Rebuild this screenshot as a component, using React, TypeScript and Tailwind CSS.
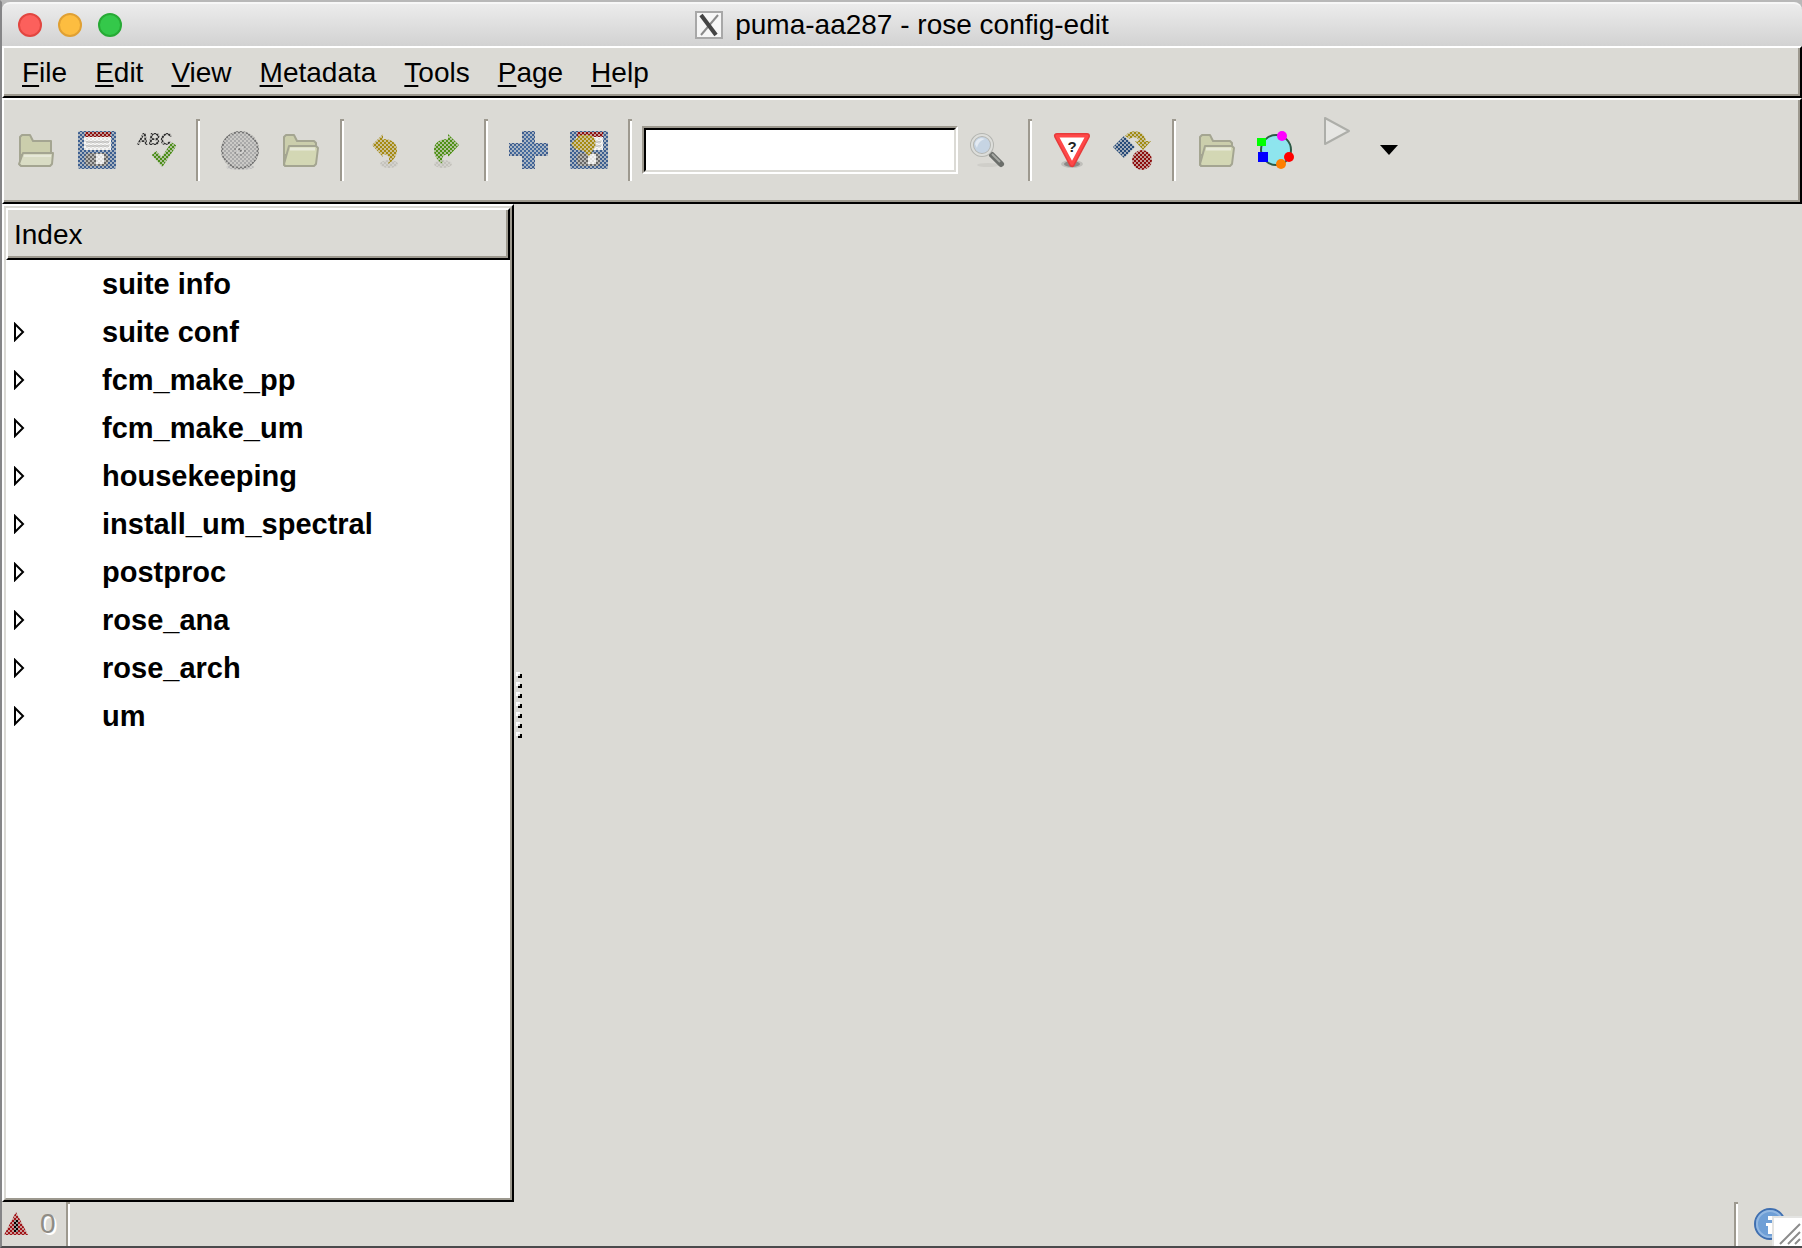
import { useId, type ReactNode } from "react";

const menus = ["File", "Edit", "View", "Metadata", "Tools", "Page", "Help"];

const sections = [
  { name: "suite info", expandable: false },
  { name: "suite conf", expandable: true },
  { name: "fcm_make_pp", expandable: true },
  { name: "fcm_make_um", expandable: true },
  { name: "housekeeping", expandable: true },
  { name: "install_um_spectral", expandable: true },
  { name: "postproc", expandable: true },
  { name: "rose_ana", expandable: true },
  { name: "rose_arch", expandable: true },
  { name: "um", expandable: true },
];

interface IconProps {
  children: ReactNode;
  disabled?: boolean;
}

// Disabled icons are stippled with a 2px checkerboard, as GTK 2 does.
function Icon({ children, disabled = false }: IconProps) {
  const id = useId();

  return (
    <svg className="block" width="40" height="40" viewBox="0 0 40 40">
      {disabled && (
        <defs>
          <pattern
            id={`${id}p`}
            width="4"
            height="4"
            patternUnits="userSpaceOnUse"
          >
            <rect width="4" height="4" fill="#505050" />
            <rect width="2" height="2" fill="#fff" />
            <rect x="2" y="2" width="2" height="2" fill="#fff" />
          </pattern>
          <mask
            id={`${id}m`}
            maskUnits="userSpaceOnUse"
            x="0"
            y="0"
            width="40"
            height="40"
          >
            <rect width="40" height="40" fill={`url(#${id}p)`} />
          </mask>
        </defs>
      )}
      <g mask={disabled ? `url(#${id}m)` : undefined}>{children}</g>
    </svg>
  );
}

function FolderOpenIcon() {
  return (
    <Icon>
      <g stroke="#a4a591" strokeWidth="2" strokeLinejoin="round">
        <path d="M4 35V7l2-2h8l3 6h18v14H4z" fill="#cbceac" />
        <path d="M7 23h30l-1 11-2 2H5l-2-2z" fill="#d9dcc4" />
      </g>
      <path d="M8 26h27" stroke="#e6e8d8" strokeWidth="2" />
    </Icon>
  );
}

function FolderIcon() {
  return (
    <Icon>
      <g stroke="#a4a591" strokeWidth="2" strokeLinejoin="round">
        <path d="M4 35V7l2-2h8l3 6h17l2 2v12H4z" fill="#cbceac" />
        <path d="M9 16h27l2 2-2 16-2 2H5l-1-2z" fill="#d3d7b4" />
      </g>
      <path d="M10 19h25" stroke="#e6e8d8" strokeWidth="3" />
    </Icon>
  );
}

function Floppy() {
  return (
    <>
      <rect x="2" y="1" width="38" height="38" rx="2" fill="#3d5f90" />
      <rect x="9" y="2" width="26" height="5" fill="#8c1010" />
      <rect x="8" y="7" width="27" height="13" fill="#f6f6f6" />
      <path d="M10 12h23M10 16h23" stroke="#c4c4c4" strokeWidth="2" />
      <rect x="9" y="23" width="23" height="13" rx="4" fill="#666" />
      <rect x="20" y="24" width="8" height="10" fill="#f2f2f2" />
    </>
  );
}

function SaveIcon() {
  return (
    <Icon disabled>
      <Floppy />
    </Icon>
  );
}

function SpellCheckIcon() {
  return (
    <Icon disabled>
      <text
        x="1"
        y="15"
        fontFamily="Liberation Sans, sans-serif"
        fontSize="16"
        fontWeight="700"
        fontStyle="italic"
        fill="#333"
      >
        ABC
      </text>
      <path
        d="M18 23l8 9 12-18"
        fill="none"
        stroke="#4b8d18"
        strokeWidth="6"
      />
    </Icon>
  );
}

function DiscIcon() {
  return (
    <Icon disabled>
      <ellipse cx="20" cy="37" rx="14" ry="3" fill="#bbb" />
      <circle cx="20" cy="20" r="18" fill="#aaa" stroke="#777" strokeWidth="2" />
      <circle cx="20" cy="20" r="5" fill="#c8c8c8" stroke="#909090" strokeWidth="2" />
      <circle cx="20" cy="20" r="2" fill="#777" />
    </Icon>
  );
}

function UndoIcon() {
  return (
    <Icon disabled>
      <ellipse cx="25" cy="34" rx="9" ry="4" fill="#c4c2bc" />
      <path
        d="M8 15L19 4v5c9 0 14 4 14 11 0 6-4 11-9 14 2-5 2-9-5-10v3z"
        fill="#a58a12"
      />
    </Icon>
  );
}

function RedoIcon() {
  return (
    <Icon disabled>
      <ellipse cx="19" cy="34" rx="9" ry="4" fill="#c4c2bc" />
      <path
        d="M35 15L24 4v5c-9 0-14 4-14 11 0 6 4 11 9 14-2-5-1-9 5-10v3z"
        fill="#4f9016"
      />
    </Icon>
  );
}

function AddIcon() {
  return (
    <Icon disabled>
      <path
        d="M15 2h11v12h13v11H26v13H15V25H2V14h13z"
        fill="#44699c"
        stroke="#3d5c8d"
        strokeWidth="2"
      />
    </Icon>
  );
}

function RevertIcon() {
  return (
    <Icon disabled>
      <Floppy />
      <path d="M3 14L12 5h10c6 2 7 9 4 14l-5 7-5-5-9-2z" fill="#a58a12" />
    </Icon>
  );
}

function SearchIcon() {
  return (
    <Icon>
      <ellipse cx="20" cy="35" rx="11" ry="2" fill="#cfcec9" />
      <path
        d="M24 25l9 9"
        stroke="#6b6e6a"
        strokeWidth="6"
        strokeLinecap="round"
      />
      <path d="M24 24l8 8" stroke="#a6a9a4" strokeWidth="2" />
      <circle
        cx="14"
        cy="15"
        r="10"
        fill="#c6d4e3"
        stroke="#b4b5b1"
        strokeWidth="4"
      />
      <circle cx="14" cy="15" r="10" fill="none" stroke="#dddedb" strokeWidth="2" />
      <path d="M7 14c1-5 6-7 10-5-4 1-7 4-8 9z" fill="#e3eaf2" />
    </Icon>
  );
}

function WarningIcon() {
  return (
    <Icon>
      <ellipse cx="20" cy="34" rx="11" ry="4" fill="#c0bfbb" />
      <ellipse cx="20" cy="34" rx="8" ry="3" fill="#8a8987" />
      <path
        d="M5 6h30L20 34z"
        fill="#fff"
        stroke="#e63b3b"
        strokeWidth="6"
        strokeLinejoin="round"
      />
      <path
        d="M5 6h30L20 34z"
        fill="#fff"
        stroke="#ff4848"
        strokeWidth="3"
        strokeLinejoin="round"
      />
      <text
        x="20"
        y="22"
        textAnchor="middle"
        fontFamily="Liberation Sans, sans-serif"
        fontSize="15"
        fontWeight="700"
        fill="#222"
      >
        ?
      </text>
    </Icon>
  );
}

function TransformIcon() {
  return (
    <Icon disabled>
      <path d="M12 6l11 11-11 11L1 17z" fill="#264a78" />
      <path
        d="M13 6c5-7 19-7 21 5h5l-8 9-8-9h4c-1-4-6-5-9-2z"
        fill="#a08a12"
      />
      <circle cx="30" cy="30" r="10" fill="#8c0c0c" />
    </Icon>
  );
}

function GraphIcon() {
  return (
    <Icon>
      <circle
        cx="20"
        cy="20"
        r="15"
        fill="#8ee5ee"
        stroke="#2c5a45"
        strokeWidth="2"
      />
      <rect x="1" y="8" width="9" height="8" fill="#0f0" />
      <rect x="2" y="22" width="10" height="10" fill="#00f" />
      <circle cx="26" cy="6" r="5" fill="#f0f" />
      <circle cx="33" cy="27" r="5" fill="#f00" />
      <circle cx="25" cy="34" r="5" fill="#ff7f00" />
    </Icon>
  );
}

function PlayIcon() {
  return (
    <svg className="block" width="28" height="28" viewBox="0 0 28 28">
      <path
        d="M3 1v26l24-13z"
        fill="#e6e6e3"
        stroke="#adaea9"
        strokeWidth="2"
        strokeLinejoin="round"
      />
    </svg>
  );
}

function ErrorIcon() {
  return (
    <Icon disabled>
      <path d="M20 8l12 23H8z" fill="#a01217" />
      <path d="M20 16v12" stroke="#000" strokeWidth="4" />
    </Icon>
  );
}

function ToolButton({ label, children }: { label: string; children: ReactNode }) {
  return (
    <button
      type="button"
      aria-label={label}
      className="flex h-[60px] w-[60px] shrink-0 items-center justify-center"
    >
      {children}
    </button>
  );
}

function ToolSeparator() {
  return (
    <div className="mx-[10px] h-[62px] w-[4px] shrink-0 border-t-2 border-l-2 border-t-[#9d998f] border-l-[#9d998f] bg-white" />
  );
}

function TitleBar() {
  return (
    <header className="relative flex h-[44px] items-center justify-center gap-[12px] rounded-t-[8px] border-t-2 border-[#f7f7f7] bg-linear-to-b from-[#ececec] to-[#d2d2d2]">
      <div className="absolute left-[16px] flex gap-[16px]">
        <button
          type="button"
          aria-label="Close"
          className="size-[24px] rounded-full border-2 border-[#e24640] bg-[#fc605c]"
        />
        <button
          type="button"
          aria-label="Minimise"
          className="size-[24px] rounded-full border-2 border-[#e0a033] bg-[#fdbd40]"
        />
        <button
          type="button"
          aria-label="Zoom"
          className="size-[24px] rounded-full border-2 border-[#27aa35] bg-[#34c84a]"
        />
      </div>
      <svg width="28" height="28" viewBox="0 0 28 28">
        <rect
          x="1"
          y="1"
          width="26"
          height="26"
          fill="#f6f6f6"
          stroke="#a8a8a8"
          strokeWidth="2"
        />
        <path d="M23 4L6 24" stroke="#8a8a8a" strokeWidth="2" />
        <path d="M6 4l15 20" stroke="#444" strokeWidth="4" />
      </svg>
      <h1 className="text-[28px] leading-[32px]">puma-aa287 - rose config-edit</h1>
    </header>
  );
}

function MenuBar() {
  return (
    <nav className="border-2 border-t-white border-r-black border-b-black border-l-white">
      <div className="flex h-[48px] items-center border-r-2 border-b-2 border-[#9d998f] pt-[3px] pl-[4px]">
        {menus.map((menu) => (
          <button
            key={menu}
            type="button"
            className="px-[14px] text-[28px] leading-[32px]"
          >
            <span className="underline decoration-2 underline-offset-[3px]">
              {menu[0]}
            </span>
            {menu.slice(1)}
          </button>
        ))}
      </div>
    </nav>
  );
}

function ToolBar() {
  return (
    <div className="border-2 border-t-white border-r-black border-b-black border-l-white">
      <div className="flex h-[102px] items-center border-r-2 border-b-2 border-[#9d998f] pl-[2px]">
        <ToolButton label="Open">
          <FolderOpenIcon />
        </ToolButton>
        <ToolButton label="Save">
          <SaveIcon />
        </ToolButton>
        <ToolButton label="Check and save">
          <SpellCheckIcon />
        </ToolButton>
        <ToolSeparator />
        <ToolButton label="Load all apps">
          <DiscIcon />
        </ToolButton>
        <ToolButton label="Browse files">
          <FolderIcon />
        </ToolButton>
        <ToolSeparator />
        <ToolButton label="Undo">
          <UndoIcon />
        </ToolButton>
        <ToolButton label="Redo">
          <RedoIcon />
        </ToolButton>
        <ToolSeparator />
        <ToolButton label="Add">
          <AddIcon />
        </ToolButton>
        <ToolButton label="Revert to saved">
          <RevertIcon />
        </ToolButton>
        <ToolSeparator />
        <div className="w-[316px] shrink-0 border-2 border-t-[#9d998f] border-r-white border-b-white border-l-[#9d998f]">
          <input
            type="text"
            aria-label="Find expression"
            className="block h-[44px] w-full border-2 border-t-black border-r-[#dbdad5] border-b-[#dbdad5] border-l-black bg-white px-[6px] text-[28px] outline-none"
          />
        </div>
        <ToolButton label="Find next">
          <SearchIcon />
        </ToolButton>
        <ToolSeparator />
        <ToolButton label="Check fail-if and warn-if">
          <WarningIcon />
        </ToolButton>
        <ToolButton label="Transform">
          <TransformIcon />
        </ToolButton>
        <ToolSeparator />
        <ToolButton label="View output">
          <FolderIcon />
        </ToolButton>
        <ToolButton label="Suite graph">
          <GraphIcon />
        </ToolButton>
        <button
          type="button"
          aria-label="Run suite"
          className="flex h-[66px] w-[60px] shrink-0 items-start justify-center"
        >
          <PlayIcon />
        </button>
        <button
          type="button"
          aria-label="Run options"
          className="flex h-[66px] w-[46px] shrink-0 items-center justify-center"
        >
          <svg width="18" height="10" viewBox="0 0 18 10">
            <path d="M0 0h18L9 10z" />
          </svg>
        </button>
      </div>
    </div>
  );
}

function IndexPanel() {
  return (
    <aside className="flex w-[512px] shrink-0 flex-col border-2 border-t-white border-r-black border-b-black border-l-white">
      <div className="flex flex-1 flex-col border-2 border-t-[#dbdad5] border-r-[#9d998f] border-b-[#9d998f] border-l-[#dbdad5] bg-white">
        <button
          type="button"
          className="block border-2 border-t-white border-r-black border-b-black border-l-white bg-[#dbdad5] text-left"
        >
          <span className="flex h-[48px] items-center border-r-2 border-b-2 border-[#9d998f] pt-[3px] pl-[6px] text-[28px] leading-[32px]">
            Index
          </span>
        </button>
        <ul>
          {sections.map((section) => (
            <li key={section.name} className="flex h-[48px] items-center pl-[8px]">
              <span className="w-[88px]">
                {section.expandable && (
                  <button
                    type="button"
                    aria-label={`Expand ${section.name}`}
                    className="block"
                  >
                    <svg className="block" width="12" height="20" viewBox="0 0 12 20">
                      <path
                        d="M1 2v16l8-8z"
                        fill="#fff"
                        stroke="#000"
                        strokeWidth="2"
                      />
                    </svg>
                  </button>
                )}
              </span>
              <span className="text-[29px] leading-[32px] font-bold">
                {section.name}
              </span>
            </li>
          ))}
        </ul>
      </div>
    </aside>
  );
}

function PaneHandle() {
  return (
    <div className="flex w-[10px] flex-col items-center justify-center gap-[4px] pt-[4px]">
      {[0, 1, 2, 3, 4, 5, 6].map((dot) => (
        <svg key={dot} width="6" height="6" viewBox="0 0 6 6">
          <rect x="2" y="2" width="4" height="4" fill="#000" />
          <rect width="4" height="4" fill="#fff" />
          <rect x="2" y="2" width="2" height="2" fill="#dbdad5" />
        </svg>
      ))}
    </div>
  );
}

function StatusBar() {
  return (
    <footer className="relative flex h-[44px] items-center">
      <span className="-ml-[6px] w-[44px]">
        <ErrorIcon />
      </span>
      <span className="w-[26px] text-[28px] leading-[32px] text-[#8f8c85] [text-shadow:2px_2px_#fff]">
        0
      </span>
      <div className="h-full w-[4px] border-t-2 border-l-2 border-[#9d998f] bg-white" />
      <div className="ml-auto h-full w-[4px] border-t-2 border-l-2 border-[#9d998f] bg-white" />
      <button
        type="button"
        aria-label="Status messages"
        className="mr-[16px] ml-[16px]"
      >
        <svg className="block" width="32" height="32" viewBox="0 0 32 32">
          <circle
            cx="16"
            cy="16"
            r="15"
            fill="#6f9fd6"
            stroke="#3f6fb0"
            strokeWidth="2"
          />
          <circle cx="16" cy="16" r="13" fill="none" stroke="#93b8e2" strokeWidth="2" />
          <path d="M14 8h5v4h-5zM12 15h7v11h-5v-8h-2z" fill="#fff" />
        </svg>
      </button>
      <svg
        className="absolute right-0 bottom-0"
        width="30"
        height="30"
        viewBox="0 0 30 30"
      >
        <rect width="30" height="30" fill="#e4e4e2" />
        <rect x="2" y="2" width="28" height="28" fill="#fff" />
        <path
          d="M8 28L28 8M16 28L28 16M23 28l5-5"
          stroke="#8c8c8c"
          strokeWidth="2"
        />
      </svg>
    </footer>
  );
}

export default function App() {
  return (
    <div className="flex min-h-screen flex-col border-t-2 border-b-2 border-l-2 border-t-[#b8b8b8] border-b-[#4a4a4c] border-l-[#858587] bg-[#b8b8b8] font-['Liberation_Sans',Arial,sans-serif] text-black">
      <TitleBar />
      <div className="flex flex-1 flex-col bg-[#dbdad5]">
        <MenuBar />
        <ToolBar />
        <main className="flex flex-1">
          <IndexPanel />
          <PaneHandle />
          <section className="flex-1" aria-label="Page" />
        </main>
        <StatusBar />
      </div>
    </div>
  );
}
